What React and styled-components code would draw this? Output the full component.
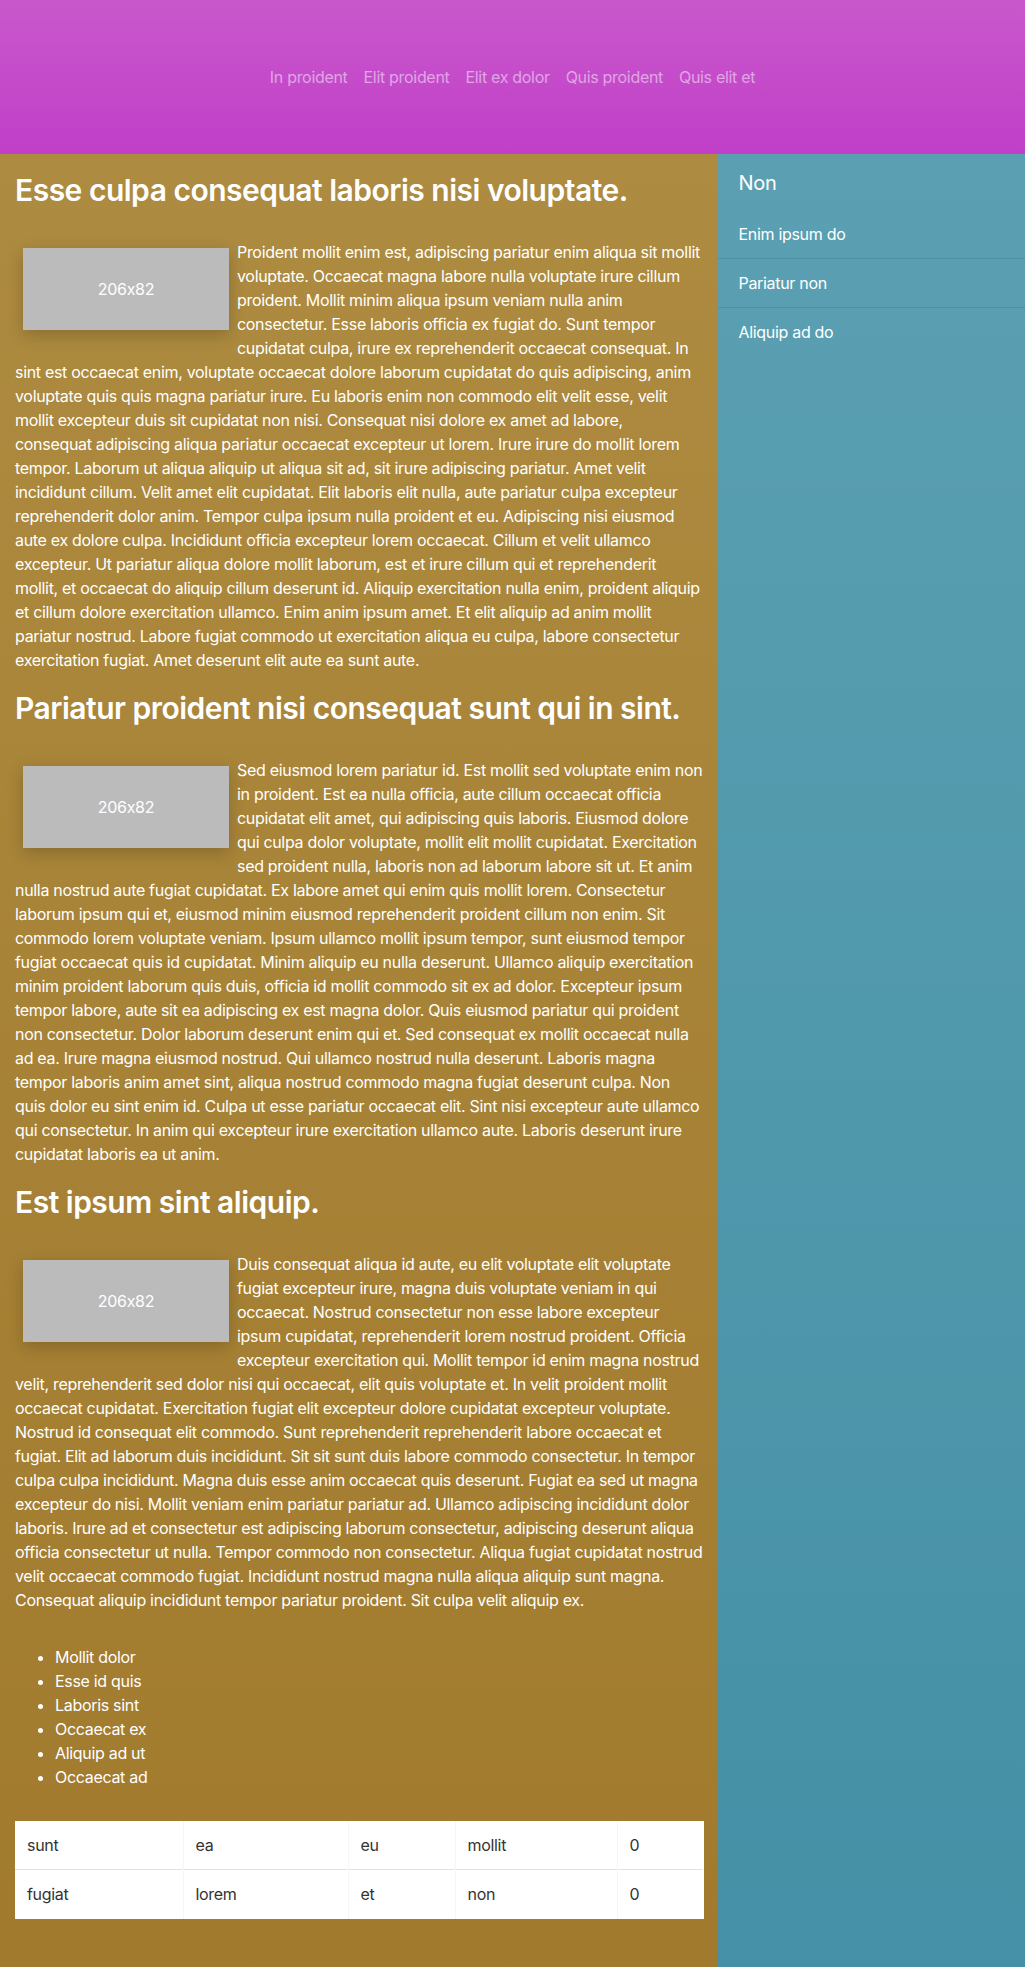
import React from "react";
import styled, { createGlobalStyle } from "styled-components";

const GlobalStyle = createGlobalStyle`
  html, body { margin: 0; padding: 0; }
  body {
    font-family: Inter, "Noto Sans", "Liberation Sans", sans-serif;
    font-size: 16px;
    letter-spacing: -0.31px;
    font-feature-settings: "calt" 0;
    color: #fff;
  }
  * { box-sizing: border-box; }
`;

const Page = styled.div`
  display: flex;
  flex-direction: column;
  min-height: 100vh;
`;

const Header = styled.header`
  height: 154px;
  flex: 0 0 auto;
  display: flex;
  align-items: center;
  justify-content: center;
  background: linear-gradient(180deg, #c958cc 0%, #c03fc8 100%);
`;

const Nav = styled.nav`
  display: flex;
  gap: 16px;
`;

const NavLink = styled.a`
  color: rgba(255, 255, 255, 0.5);
  text-decoration: none;
  font-size: 16px;
  line-height: 24px;
`;

const Body = styled.div`
  flex: 1;
  display: flex;
`;

const Main = styled.main`
  width: 70%;
  padding: 0 15px 48px;
  background: linear-gradient(180deg, #ad8b40 0%, #a17a2d 100%);
`;

const Sidebar = styled.aside`
  width: 30%;
  padding-top: 17px;
  background: linear-gradient(180deg, #5ba0b2 0%, #4590a6 100%);
`;

const SideTitle = styled.h3`
  margin: 0 0 15px;
  padding: 0 21px;
  font-size: 20px;
  line-height: 24px;
  font-weight: 400;
`;

const SideItem = styled.div`
  padding: 12px 21px;
  font-size: 16px;
  line-height: 24px;
  border-bottom: 1px solid ${(p) => (p.$last ? "transparent" : "rgba(0,0,0,0.09)")};
`;

const Section = styled.section``;

const Heading = styled.h2`
  margin: 17px 0 31px;
  font-size: 30px;
  line-height: 38px;
  font-weight: 600;
  letter-spacing: -0.5px;
`;

const Para = styled.p`
  margin: 0;
  font-size: 16px;
  line-height: 24px;
`;

const Placeholder = styled.span`
  float: left;
  width: 206px;
  height: 82px;
  margin: 8px;
  display: flex;
  align-items: center;
  justify-content: center;
  background: #bbbbbb;
  color: #fff;
  font-size: 16px;
  box-shadow: 0 5px 16px rgba(0, 0, 0, 0.2);
`;

const List = styled.ul`
  margin: 33px 0 32px;
  padding-left: 40px;
`;

const ListItem = styled.li`
  line-height: 24px;
`;

const Table = styled.table`
  width: 100%;
  border-collapse: collapse;
  table-layout: fixed;
  background: #fff;
`;

const Col = styled.col`
  width: ${(p) => p.$w}px;
`;

const Row = styled.tr`
  border-bottom: 1px solid ${(p) => (p.$last ? "transparent" : "#e2e2e2")};
`;

const Cell = styled.td`
  padding: 12px;
  height: 48px;
  font-size: 16px;
  line-height: 24px;
  color: #333;
  border-right: 1px solid ${(p) => (p.$last ? "transparent" : "#f6f6f6")};
`;

const sections = [
  {
    title: "Esse culpa consequat laboris nisi voluptate.",
    text: "Proident mollit enim est, adipiscing pariatur enim aliqua sit mollit voluptate. Occaecat magna labore nulla voluptate irure cillum proident. Mollit minim aliqua ipsum veniam nulla anim consectetur. Esse laboris officia ex fugiat do. Sunt tempor cupidatat culpa, irure ex reprehenderit occaecat consequat. In sint est occaecat enim, voluptate occaecat dolore laborum cupidatat do quis adipiscing, anim voluptate quis quis magna pariatur irure. Eu laboris enim non commodo elit velit esse, velit mollit excepteur duis sit cupidatat non nisi. Consequat nisi dolore ex amet ad labore, consequat adipiscing aliqua pariatur occaecat excepteur ut lorem. Irure irure do mollit lorem tempor. Laborum ut aliqua aliquip ut aliqua sit ad, sit irure adipiscing pariatur. Amet velit incididunt cillum. Velit amet elit cupidatat. Elit laboris elit nulla, aute pariatur culpa excepteur reprehenderit dolor anim. Tempor culpa ipsum nulla proident et eu. Adipiscing nisi eiusmod aute ex dolore culpa. Incididunt officia excepteur lorem occaecat. Cillum et velit ullamco excepteur. Ut pariatur aliqua dolore mollit laborum, est et irure cillum qui et reprehenderit mollit, et occaecat do aliquip cillum deserunt id. Aliquip exercitation nulla enim, proident aliquip et cillum dolore exercitation ullamco. Enim anim ipsum amet. Et elit aliquip ad anim mollit pariatur nostrud. Labore fugiat commodo ut exercitation aliqua eu culpa, labore consectetur exercitation fugiat. Amet deserunt elit aute ea sunt aute.",
  },
  {
    title: "Pariatur proident nisi consequat sunt qui in sint.",
    text: "Sed eiusmod lorem pariatur id. Est mollit sed voluptate enim non in proident. Est ea nulla officia, aute cillum occaecat officia cupidatat elit amet, qui adipiscing quis laboris. Eiusmod dolore qui culpa dolor voluptate, mollit elit mollit cupidatat. Exercitation sed proident nulla, laboris non ad laborum labore sit ut. Et anim nulla nostrud aute fugiat cupidatat. Ex labore amet qui enim quis mollit lorem. Consectetur laborum ipsum qui et, eiusmod minim eiusmod reprehenderit proident cillum non enim. Sit commodo lorem voluptate veniam. Ipsum ullamco mollit ipsum tempor, sunt eiusmod tempor fugiat occaecat quis id cupidatat. Minim aliquip eu nulla deserunt. Ullamco aliquip exercitation minim proident laborum quis duis, officia id mollit commodo sit ex ad dolor. Excepteur ipsum tempor labore, aute sit ea adipiscing ex est magna dolor. Quis eiusmod pariatur qui proident non consectetur. Dolor laborum deserunt enim qui et. Sed consequat ex mollit occaecat nulla ad ea. Irure magna eiusmod nostrud. Qui ullamco nostrud nulla deserunt. Laboris magna tempor laboris anim amet sint, aliqua nostrud commodo magna fugiat deserunt culpa. Non quis dolor eu sint enim id. Culpa ut esse pariatur occaecat elit. Sint nisi excepteur aute ullamco qui consectetur. In anim qui excepteur irure exercitation ullamco aute. Laboris deserunt irure cupidatat laboris ea ut anim.",
  },
  {
    title: "Est ipsum sint aliquip.",
    text: "Duis consequat aliqua id aute, eu elit voluptate elit voluptate fugiat excepteur irure, magna duis voluptate veniam in qui occaecat. Nostrud consectetur non esse labore excepteur ipsum cupidatat, reprehenderit lorem nostrud proident. Officia excepteur exercitation qui. Mollit tempor id enim magna nostrud velit, reprehenderit sed dolor nisi qui occaecat, elit quis voluptate et. In velit proident mollit occaecat cupidatat. Exercitation fugiat elit excepteur dolore cupidatat excepteur voluptate. Nostrud id consequat elit commodo. Sunt reprehenderit reprehenderit labore occaecat et fugiat. Elit ad laborum duis incididunt. Sit sit sunt duis labore commodo consectetur. In tempor culpa culpa incididunt. Magna duis esse anim occaecat quis deserunt. Fugiat ea sed ut magna excepteur do nisi. Mollit veniam enim pariatur pariatur ad. Ullamco adipiscing incididunt dolor laboris. Irure ad et consectetur est adipiscing laborum consectetur, adipiscing deserunt aliqua officia consectetur ut nulla. Tempor commodo non consectetur. Aliqua fugiat cupidatat nostrud velit occaecat commodo fugiat. Incididunt nostrud magna nulla aliqua aliquip sunt magna. Consequat aliquip incididunt tempor pariatur proident. Sit culpa velit aliquip ex.",
  },
];

const navLinks = ["In proident", "Elit proident", "Elit ex dolor", "Quis proident", "Quis elit et"];
const listItems = ["Mollit dolor", "Esse id quis", "Laboris sint", "Occaecat ex", "Aliquip ad ut", "Occaecat ad"];
const sideItems = ["Enim ipsum do", "Pariatur non", "Aliquip ad do"];
const colWidths = [168, 165, 107, 162, 86];
const rows = [
  ["sunt", "ea", "eu", "mollit", "0"],
  ["fugiat", "lorem", "et", "non", "0"],
];

export default function App() {
  return (
    <>
      <GlobalStyle />
      <Page>
        <Header>
          <Nav>
            {navLinks.map((l) => (
              <NavLink key={l} href="#">
                {l}
              </NavLink>
            ))}
          </Nav>
        </Header>
        <Body>
          <Main>
            {sections.map((s) => (
              <Section key={s.title}>
                <Heading>{s.title}</Heading>
                <Para>
                  <Placeholder>206x82</Placeholder>
                  {s.text}
                </Para>
              </Section>
            ))}
            <List>
              {listItems.map((i) => (
                <ListItem key={i}>{i}</ListItem>
              ))}
            </List>
            <Table>
              <colgroup>
                {colWidths.map((w, i) => (
                  <Col key={i} $w={w} />
                ))}
              </colgroup>
              <tbody>
                {rows.map((r, ri) => (
                  <Row key={ri} $last={ri === rows.length - 1}>
                    {r.map((c, ci) => (
                      <Cell key={ci} $last={ci === r.length - 1}>
                        {c}
                      </Cell>
                    ))}
                  </Row>
                ))}
              </tbody>
            </Table>
          </Main>
          <Sidebar>
            <SideTitle>Non</SideTitle>
            {sideItems.map((s, i) => (
              <SideItem key={s} $last={i === sideItems.length - 1}>
                {s}
              </SideItem>
            ))}
          </Sidebar>
        </Body>
      </Page>
    </>
  );
}
